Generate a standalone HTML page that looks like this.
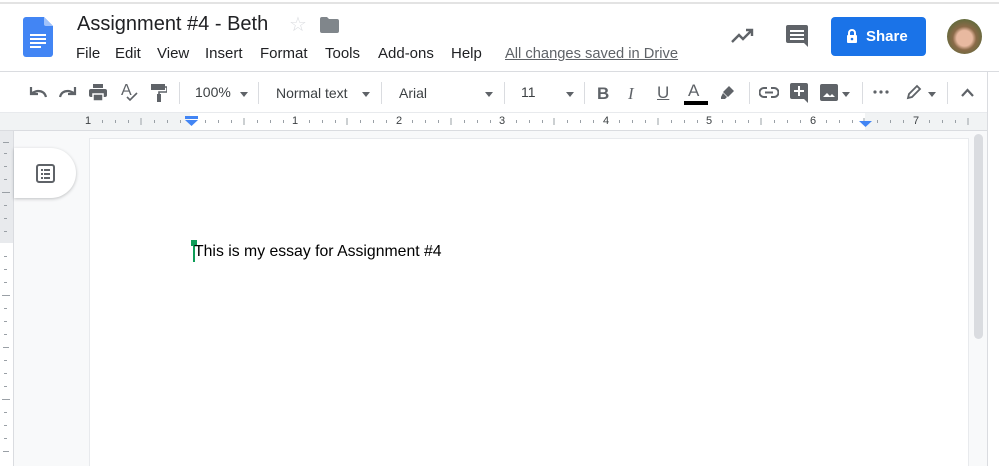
<!DOCTYPE html>
<html><head><meta charset="utf-8"><style>
*{margin:0;padding:0;box-sizing:border-box}
body{width:999px;height:466px;overflow:hidden;background:#fff;font-family:"Liberation Sans",Arial,sans-serif;position:relative;color:#202124}
.a{position:absolute}
.menu span{position:absolute;top:45px;font-size:15px;color:#202124}
.tb{font-size:14px;color:#3c4043}
.sep{position:absolute;top:82px;width:1px;height:22px;background:#dadce0}
.caret{position:absolute;width:0;height:0;border-left:4.5px solid transparent;border-right:4.5px solid transparent;border-top:5px solid #5f6368}
.rn{position:absolute;top:115px;font-size:11px;color:#3c4043}
</style></head><body>
<div class="a" style="left:0;top:2px;width:999px;height:2px;background:#e3e3e3"></div>
<svg class="a" style="left:23px;top:17px" width="30" height="40" viewBox="0 0 30 40"><path d="M3 0h18l9 9v28a3 3 0 0 1-3 3H3a3 3 0 0 1-3-3V3a3 3 0 0 1 3-3z" fill="#4285f4"/><path d="M21 0l9 9h-7a2 2 0 0 1-2-2z" fill="#a1c2fa"/><rect x="7" y="17" width="16" height="2" fill="#fff"/><rect x="7" y="21" width="16" height="2" fill="#fff"/><rect x="7" y="25" width="16" height="2" fill="#fff"/><rect x="7" y="29" width="11" height="2" fill="#fff"/></svg>
<div class="a" style="left:77px;top:13px;font-size:20px;color:#202124">Assignment #4 - Beth</div>
<div class="a" style="left:289px;top:12px;font-size:20px;color:#dadce0">☆</div>
<svg class="a" style="left:320px;top:17px" width="19" height="16" viewBox="0 0 19 16"><path d="M0 2a2 2 0 0 1 2-2h5l2 2h8a2 2 0 0 1 2 2v10a2 2 0 0 1-2 2H2a2 2 0 0 1-2-2z" fill="#80868b"/></svg>
<div class="menu">
<span style="left:76px">File</span><span style="left:115px">Edit</span><span style="left:157px">View</span><span style="left:205px">Insert</span><span style="left:260px">Format</span><span style="left:325px">Tools</span><span style="left:378px">Add-ons</span><span style="left:451px">Help</span>
<span style="left:505px;color:#5f6368;text-decoration:underline;font-size:14.7px;top:46px">All changes saved in Drive</span>
</div>
<svg class="a" style="left:731px;top:28px" width="24" height="16" viewBox="0 0 24 16"><path d="M1 14l7-7 4 4 9-9M15 2h6v6" stroke="#5f6368" stroke-width="2.4" fill="none"/></svg>
<svg class="a" style="left:786px;top:25px" width="22" height="22" viewBox="0 0 22 22"><path d="M2 0h18a2 2 0 0 1 2 2v20l-4-4H2a2 2 0 0 1-2-2V2a2 2 0 0 1 2-2z" fill="#5f6368"/><rect x="4" y="5" width="14" height="2" fill="#fff"/><rect x="4" y="9" width="14" height="2" fill="#fff"/><rect x="4" y="13" width="14" height="2" fill="#fff"/></svg>
<div class="a" style="left:831px;top:17px;width:95px;height:39px;background:#1a73e8;border-radius:4px;color:#fff;font-size:15px;font-weight:bold;line-height:39px;padding-left:35px">Share</div>
<svg class="a" style="left:846px;top:29px" width="12" height="14" viewBox="0 0 12 14"><rect x="1" y="6" width="10" height="8" rx="1" fill="#fff"/><path d="M3 6V4a3 3 0 0 1 6 0v2" stroke="#fff" stroke-width="2" fill="none"/><circle cx="6" cy="10" r="1.3" fill="#1a73e8"/></svg>
<div class="a" style="left:947px;top:19px;width:35px;height:35px;border-radius:50%;background:radial-gradient(circle at 50% 55%,#e8b9a0 0 30%,#8a6a48 45%,#5a6b3a 80%)"></div>
<div class="a" style="left:0;top:71px;width:999px;height:1px;background:#dadce0"></div>
<svg class="a" style="left:28px;top:86px" width="20" height="12" viewBox="0 0 20 12"><path d="M18 11c-1-4-4-6-8-6-2 0-4 1-6 2M3 1v7h7" stroke="#5f6368" stroke-width="2.2" fill="none"/></svg>
<svg class="a" style="left:58px;top:86px" width="20" height="12" viewBox="0 0 20 12"><path d="M2 11c1-4 4-6 8-6 2 0 4 1 6 2M17 1v7h-7" stroke="#5f6368" stroke-width="2.2" fill="none"/></svg>
<svg class="a" style="left:89px;top:84px" width="18" height="17" viewBox="0 0 18 17"><rect x="4" y="0" width="10" height="4" fill="#5f6368"/><rect x="0" y="5" width="18" height="8" rx="2" fill="#5f6368"/><rect x="4" y="10" width="10" height="7" fill="#5f6368" stroke="#fff" stroke-width="1.5"/></svg>
<div class="a" style="left:121px;top:82px;font-size:16px;color:#5f6368">A</div>
<svg class="a" style="left:126px;top:92px" width="12" height="10" viewBox="0 0 12 10"><path d="M1 5l3 3 7-7" stroke="#5f6368" stroke-width="1.6" fill="none"/></svg>
<svg class="a" style="left:151px;top:84px" width="16" height="18" viewBox="0 0 16 18"><rect x="0" y="0" width="14" height="6" fill="#5f6368"/><path d="M14 3h2v5H8v3" stroke="#5f6368" stroke-width="1.6" fill="none"/><rect x="6" y="10" width="4" height="8" fill="#5f6368"/></svg>
<div class="sep" style="left:179px"></div>
<div class="a tb" style="left:195px;top:84px">100%</div><div class="caret" style="left:240px;top:92px"></div>
<div class="sep" style="left:258px"></div>
<div class="a tb" style="left:276px;top:85px">Normal text</div><div class="caret" style="left:362px;top:92px"></div>
<div class="sep" style="left:381px"></div>
<div class="a tb" style="left:399px;top:85px">Arial</div><div class="caret" style="left:485px;top:92px"></div>
<div class="sep" style="left:504px"></div>
<div class="a tb" style="left:521px;top:84px">11</div><div class="caret" style="left:566px;top:92px"></div>
<div class="sep" style="left:584px"></div>
<div class="a" style="left:597px;top:84px;font-size:17px;font-weight:bold;color:#5f6368">B</div>
<div class="a" style="left:628px;top:84px;font-size:17px;font-style:italic;color:#5f6368;font-family:'Liberation Serif',serif">I</div>
<div class="a" style="left:657px;top:83px;font-size:17px;text-decoration:underline;color:#5f6368">U</div>
<div class="a" style="left:688px;top:81px;font-size:17px;color:#5f6368">A</div>
<div class="a" style="left:684px;top:101px;width:24px;height:4px;background:#000"></div>
<svg class="a" style="left:720px;top:84px" width="16" height="16" viewBox="0 0 16 16"><path d="M9 2l5 5-6 6-5-5zM3 9l4 4-2 2H1v-2z" fill="#5f6368"/></svg>
<div class="sep" style="left:749px"></div>
<svg class="a" style="left:759px;top:87px" width="20" height="11" viewBox="0 0 20 11"><path d="M8 1H5a4.5 4.5 0 0 0 0 9h3M12 1h3a4.5 4.5 0 0 1 0 9h-3M6 5.5h8" stroke="#5f6368" stroke-width="2" fill="none"/></svg>
<svg class="a" style="left:790px;top:83px" width="18" height="20" viewBox="0 0 18 20"><path d="M2 0h14a2 2 0 0 1 2 2v18l-4-4H2a2 2 0 0 1-2-2V2a2 2 0 0 1 2-2z" fill="#5f6368"/><path d="M9 3v10M4 8h10" stroke="#fff" stroke-width="2"/></svg>
<svg class="a" style="left:820px;top:84px" width="18" height="17" viewBox="0 0 18 17"><rect width="18" height="17" rx="2" fill="#5f6368"/><path d="M3 13l4-4 3 3 2-2 3 3z" fill="#fff"/></svg>
<div class="caret" style="left:842px;top:92px"></div>
<div class="sep" style="left:862px"></div>
<svg class="a" style="left:873px;top:90px" width="16" height="4" viewBox="0 0 16 4"><circle cx="2" cy="2" r="1.6" fill="#5f6368"/><circle cx="8" cy="2" r="1.6" fill="#5f6368"/><circle cx="14" cy="2" r="1.6" fill="#5f6368"/></svg>
<svg class="a" style="left:906px;top:84px" width="16" height="16" viewBox="0 0 16 16"><path d="M2 14l1-4 8-8 3 3-8 8z" stroke="#5f6368" stroke-width="1.8" fill="none"/></svg>
<div class="caret" style="left:928px;top:92px"></div>
<div class="sep" style="left:947px"></div>
<svg class="a" style="left:961px;top:88px" width="13" height="9" viewBox="0 0 13 9"><path d="M1 8l5.5-6 5.5 6" stroke="#5f6368" stroke-width="2.2" fill="none"/></svg>
<div class="a" style="left:987px;top:72px;width:1px;height:394px;background:#dadce0"></div>
<div class="a" style="left:0;top:112px;width:987px;height:1px;background:#e8eaed"></div>
<div class="a" style="left:0;top:113px;width:987px;height:17px;background:#f1f3f4"></div>
<div class="a" style="left:190px;top:113px;width:675px;height:17px;background:#fff"></div>
<svg class="a" style="left:0;top:113px" width="987" height="17">
<g stroke="#9aa0a6" stroke-width="1">
<line x1="141" y1="5" x2="141" y2="12"/><line x1="244" y1="5" x2="244" y2="12"/><line x1="347" y1="5" x2="347" y2="12"/><line x1="451" y1="5" x2="451" y2="12"/><line x1="554" y1="5" x2="554" y2="12"/><line x1="658" y1="5" x2="658" y2="12"/><line x1="761" y1="5" x2="761" y2="12"/><line x1="864" y1="5" x2="864" y2="12"/><line x1="968" y1="5" x2="968" y2="12"/>
</g>
<g fill="#9aa0a6">
<rect x="102" y="7" width="1" height="3"/><rect x="115" y="7" width="1" height="3"/><rect x="128" y="7" width="1" height="3"/><rect x="154" y="7" width="1" height="3"/><rect x="167" y="7" width="1" height="3"/><rect x="180" y="7" width="1" height="3"/>
<rect x="205" y="7" width="1" height="3"/><rect x="218" y="7" width="1" height="3"/><rect x="231" y="7" width="1" height="3"/><rect x="257" y="7" width="1" height="3"/><rect x="270" y="7" width="1" height="3"/><rect x="283" y="7" width="1" height="3"/>
<rect x="309" y="7" width="1" height="3"/><rect x="322" y="7" width="1" height="3"/><rect x="335" y="7" width="1" height="3"/><rect x="360" y="7" width="1" height="3"/><rect x="373" y="7" width="1" height="3"/><rect x="386" y="7" width="1" height="3"/>
<rect x="412" y="7" width="1" height="3"/><rect x="425" y="7" width="1" height="3"/><rect x="438" y="7" width="1" height="3"/><rect x="464" y="7" width="1" height="3"/><rect x="477" y="7" width="1" height="3"/><rect x="490" y="7" width="1" height="3"/>
<rect x="516" y="7" width="1" height="3"/><rect x="529" y="7" width="1" height="3"/><rect x="542" y="7" width="1" height="3"/><rect x="567" y="7" width="1" height="3"/><rect x="580" y="7" width="1" height="3"/><rect x="593" y="7" width="1" height="3"/>
<rect x="619" y="7" width="1" height="3"/><rect x="632" y="7" width="1" height="3"/><rect x="645" y="7" width="1" height="3"/><rect x="671" y="7" width="1" height="3"/><rect x="684" y="7" width="1" height="3"/><rect x="697" y="7" width="1" height="3"/>
<rect x="722" y="7" width="1" height="3"/><rect x="735" y="7" width="1" height="3"/><rect x="748" y="7" width="1" height="3"/><rect x="774" y="7" width="1" height="3"/><rect x="787" y="7" width="1" height="3"/><rect x="800" y="7" width="1" height="3"/>
<rect x="826" y="7" width="1" height="3"/><rect x="839" y="7" width="1" height="3"/><rect x="852" y="7" width="1" height="3"/><rect x="877" y="7" width="1" height="3"/><rect x="890" y="7" width="1" height="3"/><rect x="903" y="7" width="1" height="3"/><rect x="929" y="7" width="1" height="3"/><rect x="942" y="7" width="1" height="3"/><rect x="955" y="7" width="1" height="3"/>
</g>
<rect x="185" y="3" width="13" height="3" fill="#4285f4"/><path d="M185 7h13l-6.5 6z" fill="#4285f4"/>
<path d="M859 8h13l-6.5 6z" fill="#4285f4"/>
</svg>
<div class="rn" style="left:85px">1</div><div class="rn" style="left:292px">1</div><div class="rn" style="left:396px">2</div><div class="rn" style="left:499px">3</div><div class="rn" style="left:603px">4</div><div class="rn" style="left:706px">5</div><div class="rn" style="left:810px">6</div><div class="rn" style="left:913px">7</div>
<div class="a" style="left:0;top:130px;width:987px;height:1px;background:#dadce0"></div>
<div class="a" style="left:0;top:131px;width:987px;height:335px;background:#f8f9fa"></div>
<div class="a" style="left:0;top:131px;width:13px;height:112px;background:#e8eaed"></div>
<div class="a" style="left:0;top:243px;width:13px;height:223px;background:#fff"></div>
<div class="a" style="left:13px;top:131px;width:1px;height:335px;background:#dadce0"></div>
<svg class="a" style="left:0;top:131px" width="13" height="335"><g fill="#9aa0a6">
<rect x="3" y="11" width="6" height="1"/><rect x="4" y="22" width="3" height="1"/><rect x="4" y="35" width="3" height="1"/><rect x="4" y="48" width="3" height="1"/><rect x="2" y="61" width="8" height="1"/><rect x="4" y="74" width="3" height="1"/><rect x="4" y="87" width="3" height="1"/><rect x="4" y="100" width="3" height="1"/><rect x="4" y="125" width="3" height="1"/><rect x="4" y="138" width="3" height="1"/><rect x="4" y="151" width="3" height="1"/><rect x="2" y="164" width="8" height="1"/><rect x="4" y="177" width="3" height="1"/><rect x="4" y="190" width="3" height="1"/><rect x="4" y="203" width="3" height="1"/><rect x="3" y="216" width="6" height="1"/><rect x="4" y="229" width="3" height="1"/><rect x="4" y="242" width="3" height="1"/><rect x="4" y="255" width="3" height="1"/><rect x="2" y="268" width="8" height="1"/><rect x="4" y="281" width="3" height="1"/><rect x="4" y="294" width="3" height="1"/><rect x="4" y="307" width="3" height="1"/><rect x="3" y="320" width="6" height="1"/>
</g></svg>
<div class="a" style="left:14px;top:148px;width:62px;height:50px;background:#fff;border-radius:0 25px 25px 0;box-shadow:0 1px 3px rgba(60,64,67,.3)"></div>
<svg class="a" style="left:36px;top:164px" width="19" height="19" viewBox="0 0 19 19"><rect x="1" y="1" width="17" height="17" rx="2" fill="none" stroke="#5f6368" stroke-width="2"/><g fill="#5f6368"><rect x="5" y="5" width="2" height="2"/><rect x="8" y="5" width="6" height="2"/><rect x="5" y="9" width="2" height="2"/><rect x="8" y="9" width="6" height="2"/><rect x="5" y="13" width="2" height="2"/><rect x="8" y="13" width="6" height="2"/></g></svg>
<div class="a" style="left:89px;top:138px;width:880px;height:328px;background:#fff;border:1px solid #e8eaed;border-bottom:none"></div>
<div class="a" style="left:974px;top:134px;width:9px;height:205px;background:#dadce0;border-radius:5px"></div>
<div class="a" style="left:191px;top:240px;width:6px;height:6px;background:#0f9d58"></div>
<div class="a" style="left:193px;top:240px;width:2px;height:22px;background:#0f9d58"></div>
<div class="a" style="left:194px;top:243px;font-size:15.8px;color:#000">This is my essay for Assignment #4</div>
</body></html>
